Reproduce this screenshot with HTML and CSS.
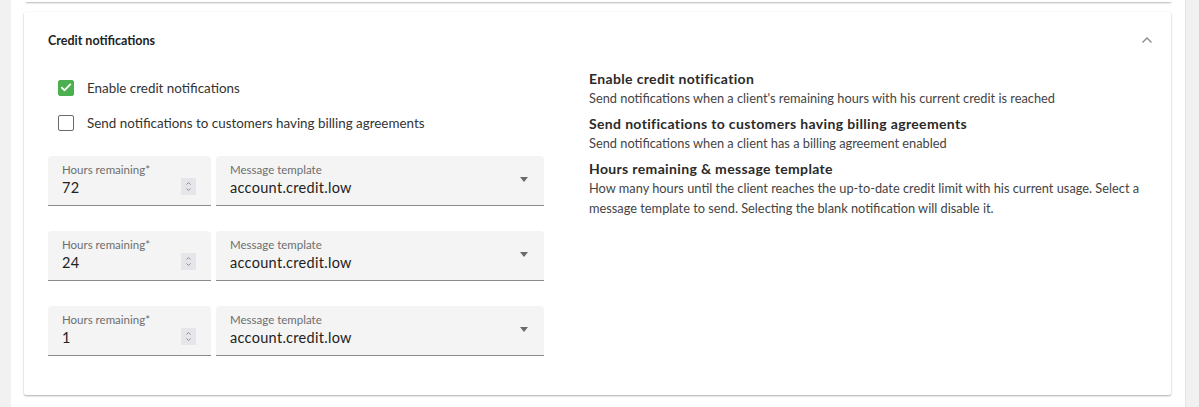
FILE: index.html
```html
<!DOCTYPE html>
<html lang="en">
<head>
<meta charset="utf-8">
<title>Credit notifications</title>
<link rel="stylesheet" href="styles.css">
</head>
<body>
<div class="page">
  <div class="panel">
    <div class="prev-card"></div>
    <section class="card">
      <header class="card-header">
        <h2 class="card-title">Credit notifications</h2>
        <svg class="collapse-icon" width="12" height="8" viewBox="0 0 12 8"><path d="M1.5 6.5 L6 2 L10.5 6.5" fill="none" stroke="#8a8a8a" stroke-width="1.4"/></svg>
      </header>
      <div class="card-body">
        <div class="form-col">
          <label class="check-row">
            <span class="checkbox checked"><svg width="16" height="16" viewBox="0 0 16 16"><path d="M3.3 8.2 L6.5 11.3 L12.8 4.8" fill="none" stroke="#fff" stroke-width="1.8"/></svg></span>
            <span class="check-label">Enable credit notifications</span>
          </label>
          <label class="check-row">
            <span class="checkbox"></span>
            <span class="check-label">Send notifications to customers having billing agreements</span>
          </label>
          <div class="field-rows">
            <div class="field-row">
              <div class="field">
                <span class="field-label">Hours remaining*</span>
                <span class="field-value">72</span>
                <span class="spinner"><svg width="15" height="17" viewBox="0 0 15 17"><path d="M5.5 6.5 L7.5 4.5 L9.5 6.5 M5.5 10.5 L7.5 12.5 L9.5 10.5" fill="none" stroke="#8f8f8f" stroke-width="1"/></svg></span>
              </div>
              <div class="field">
                <span class="field-label">Message template</span>
                <span class="field-value">account.credit.low</span>
                <span class="caret"></span>
              </div>
            </div>
            <div class="field-row">
              <div class="field">
                <span class="field-label">Hours remaining*</span>
                <span class="field-value">24</span>
                <span class="spinner"><svg width="15" height="17" viewBox="0 0 15 17"><path d="M5.5 6.5 L7.5 4.5 L9.5 6.5 M5.5 10.5 L7.5 12.5 L9.5 10.5" fill="none" stroke="#8f8f8f" stroke-width="1"/></svg></span>
              </div>
              <div class="field">
                <span class="field-label">Message template</span>
                <span class="field-value">account.credit.low</span>
                <span class="caret"></span>
              </div>
            </div>
            <div class="field-row">
              <div class="field">
                <span class="field-label">Hours remaining*</span>
                <span class="field-value">1</span>
                <span class="spinner"><svg width="15" height="17" viewBox="0 0 15 17"><path d="M5.5 6.5 L7.5 4.5 L9.5 6.5 M5.5 10.5 L7.5 12.5 L9.5 10.5" fill="none" stroke="#8f8f8f" stroke-width="1"/></svg></span>
              </div>
              <div class="field">
                <span class="field-label">Message template</span>
                <span class="field-value">account.credit.low</span>
                <span class="caret"></span>
              </div>
            </div>
          </div>
        </div>
        <div class="help-col">
          <div class="help-item">
            <h3 class="help-title">Enable credit notification</h3>
            <p class="help-text">Send notifications when a client's remaining hours with his current credit is reached</p>
          </div>
          <div class="help-item">
            <h3 class="help-title">Send notifications to customers having billing agreements</h3>
            <p class="help-text">Send notifications when a client has a billing agreement enabled</p>
          </div>
          <div class="help-item">
            <h3 class="help-title">Hours remaining &amp; message template</h3>
            <p class="help-text">How many hours until the client reaches the up-to-date credit limit with his current usage. Select a message template to send. Selecting the blank notification will disable it.</p>
          </div>
        </div>
      </div>
    </section>
  </div>
</div>
</body>
</html>
```

FILE: styles.css
```css
html, body {
  margin: 0;
  padding: 0;
  height: 100%;
}
body {
  font-family: Lato, "Open Sans", Arial, sans-serif;
  color: #333;
  background: #f1f1f1;
}
.page {
  height: 407px;
  padding: 0 13px 0 11px;
  overflow: hidden;
}
.panel {
  background: #fff;
  height: 100%;
  padding: 0 14px 0 13px;
  border-right: 1px solid #e4e4e4;
}
.prev-card {
  height: 2px;
  margin: 0 0 0 2px;
  background: #fff;
  box-shadow: 0 1px 2px rgba(0,0,0,0.3);
}
.card {
  margin-top: 10px;
  background: #fff;
  border-radius: 2px;
  box-shadow: 0 1px 2px rgba(0,0,0,0.32), 0 0 1px rgba(0,0,0,0.05);
  padding: 0 24px 39px;
}
.card-header {
  display: flex;
  align-items: center;
  justify-content: space-between;
  padding: 20px 0 20px;
}
.card-title {
  margin: 0;
  font-size: 12.5px;
  line-height: 18px;
  font-weight: 700;
  color: #222;
}
.collapse-icon {
  margin-right: -6px;
  margin-top: -3px;
}
.card-body {
  display: grid;
  grid-template-columns: 496px 1fr;
  column-gap: 45px;
}
.check-row {
  display: flex;
  align-items: center;
  height: 35px;
  padding-left: 10px;
}
.checkbox {
  box-sizing: border-box;
  width: 16px;
  height: 16px;
  border: 1.5px solid #6a6a6a;
  border-radius: 2px;
  margin-right: 13px;
  flex: none;
  display: flex;
}
.checkbox.checked {
  background: #4caf50;
  border-color: #4caf50;
}
.checkbox.checked svg {
  margin: -1.5px;
}
.check-label {
  font-size: 13.4px;
  color: #333;
}
.field-rows {
  margin-top: 16px;
  display: flex;
  flex-direction: column;
  gap: 25px;
}
.field-row {
  display: grid;
  grid-template-columns: 163px 1fr;
  column-gap: 5px;
}
.field {
  box-sizing: border-box;
  height: 50px;
  background: #f4f4f4;
  border-bottom: 1px solid #8a8a8a;
  border-radius: 4px 4px 0 0;
  padding: 7px 14px 0;
  display: grid;
  grid-template-columns: 1fr auto;
  grid-template-rows: 13px 21px;
  align-items: center;
}
.field-label {
  grid-column: 1;
  grid-row: 1;
  font-size: 11.5px;
  line-height: 13px;
  color: #6e6e6e;
}
.field-value {
  grid-column: 1;
  grid-row: 2;
  font-size: 14.5px;
  letter-spacing: 0.3px;
  line-height: 21px;
  padding-top: 1px;
  color: #222;
}
.spinner {
  grid-column: 2;
  grid-row: 2;
  width: 15px;
  height: 17px;
  background: #e6e6ea;
  display: flex;
  margin-right: 1px;
}
.caret {
  grid-column: 2;
  grid-row: 1 / 3;
  width: 0;
  height: 0;
  border-left: 4.5px solid transparent;
  border-right: 4.5px solid transparent;
  border-top: 5px solid #6a6a6a;
  margin-right: 2px;
  margin-top: -2px;
}
.help-col {
  margin-top: -1.5px;
}
.help-item {
  margin-bottom: 6px;
}
.help-title {
  margin: 0;
  font-size: 14px;
  letter-spacing: 0.35px;
  line-height: 19px;
  font-weight: 700;
  color: #2a2a2a;
}
.help-text {
  margin: 0;
  font-size: 12.8px;
  line-height: 20px;
  color: #444;
}
```
